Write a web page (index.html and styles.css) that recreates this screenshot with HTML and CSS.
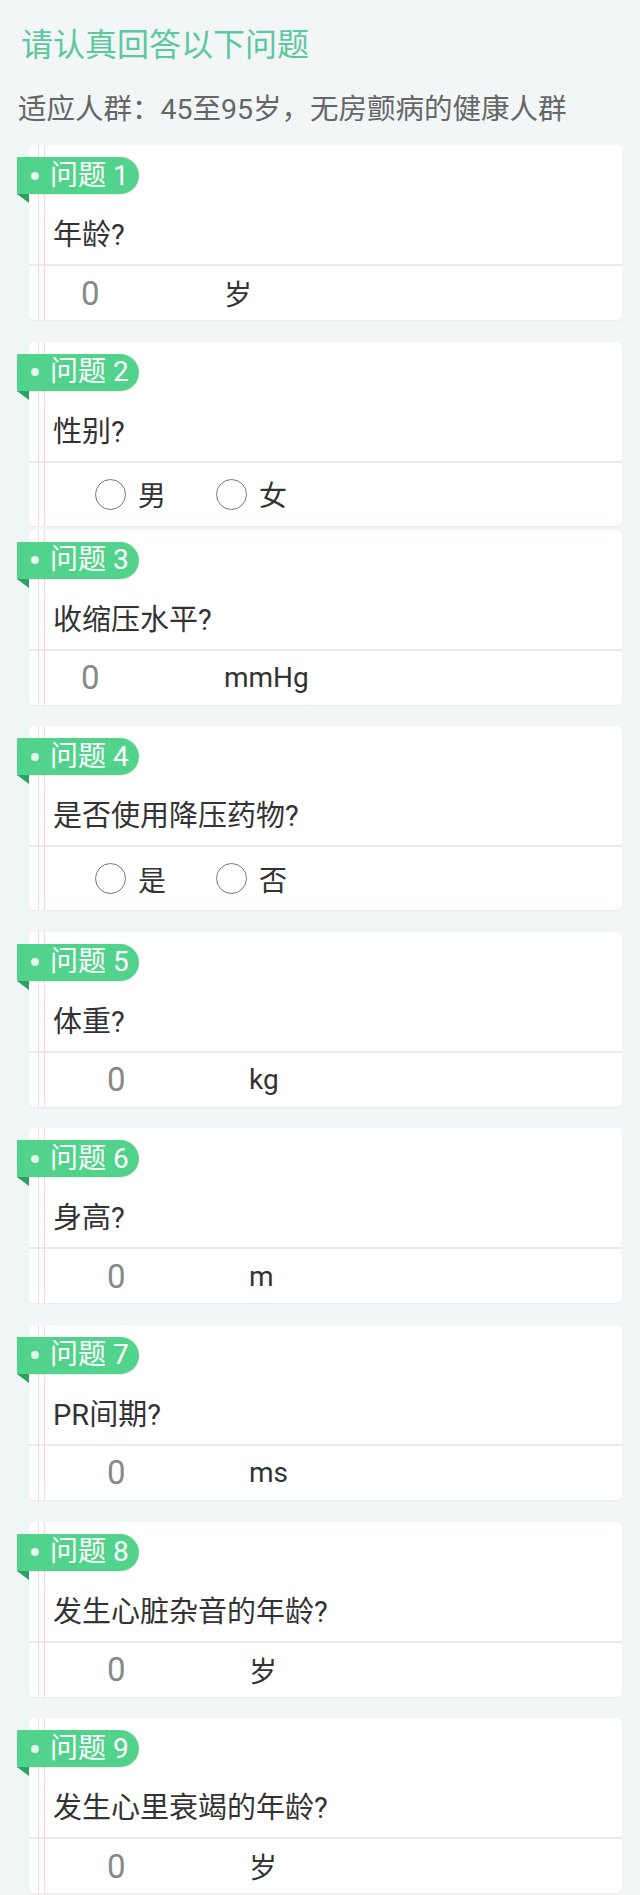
FILE: index.html
```html
<!DOCTYPE html>
<html lang="zh-CN">
<head>
<meta charset="utf-8">
<title>问卷</title>
<link rel="stylesheet" href="styles.css">
</head>
<body>
<div class="page">
  <h1 class="title">请认真回答以下问题</h1>
  <p class="subtitle">适应人群：45至95岁，无房颤病的健康人群</p>
  <div class="list">
    <div class="card">
      <div class="tag"><span class="dot"></span><span>问题 1</span></div>
      <div class="question">年龄?</div>
      <div class="answer"><span class="val">0</span><span class="unit">岁</span></div>
    </div>
    <div class="card">
      <div class="tag"><span class="dot"></span><span>问题 2</span></div>
      <div class="question">性别?</div>
      <div class="answer answer--radio">
        <div class="radio-group">
          <span class="radio"><span class="circle"></span>男</span>
          <span class="radio"><span class="circle"></span>女</span>
        </div>
      </div>
    </div>
    <div class="card card--tight">
      <div class="tag"><span class="dot"></span><span>问题 3</span></div>
      <div class="question">收缩压水平?</div>
      <div class="answer"><span class="val">0</span><span class="unit">mmHg</span></div>
    </div>
    <div class="card">
      <div class="tag"><span class="dot"></span><span>问题 4</span></div>
      <div class="question">是否使用降压药物?</div>
      <div class="answer answer--radio">
        <div class="radio-group">
          <span class="radio"><span class="circle"></span>是</span>
          <span class="radio"><span class="circle"></span>否</span>
        </div>
      </div>
    </div>
    <div class="card">
      <div class="tag"><span class="dot"></span><span>问题 5</span></div>
      <div class="question">体重?</div>
      <div class="answer answer--wide"><span class="val">0</span><span class="unit">kg</span></div>
    </div>
    <div class="card">
      <div class="tag"><span class="dot"></span><span>问题 6</span></div>
      <div class="question">身高?</div>
      <div class="answer answer--wide"><span class="val">0</span><span class="unit">m</span></div>
    </div>
    <div class="card">
      <div class="tag"><span class="dot"></span><span>问题 7</span></div>
      <div class="question">PR间期?</div>
      <div class="answer answer--wide"><span class="val">0</span><span class="unit">ms</span></div>
    </div>
    <div class="card">
      <div class="tag"><span class="dot"></span><span>问题 8</span></div>
      <div class="question">发生心脏杂音的年龄?</div>
      <div class="answer answer--wide"><span class="val">0</span><span class="unit">岁</span></div>
    </div>
    <div class="card">
      <div class="tag"><span class="dot"></span><span>问题 9</span></div>
      <div class="question">发生心里衰竭的年龄?</div>
      <div class="answer answer--wide"><span class="val">0</span><span class="unit">岁</span></div>
    </div>
  </div>
</div>
</body>
</html>
```

FILE: styles.css
```css
body {
  margin: 0;
  background: #f2f6f7;
  font-family: Roboto, "Noto Sans CJK SC", sans-serif;
}

.page {
  padding: 23px 18px 40px 17px;
}

.title {
  margin: 0 0 0 4px;
  font-size: 32px;
  line-height: 44px;
  font-weight: 400;
  color: #5cc89d;
}

.subtitle {
  margin: 23px 0 0 1px;
  font-size: 28.5px;
  line-height: 40px;
  color: #666;
}

.list {
  margin-top: 15px;
  border-left: 12px solid #eef7f5;
  display: flex;
  flex-direction: column;
  gap: 21.6px;
}

.card {
  position: relative;
  background: #fff;
  border-radius: 5px;
  box-shadow: 0 1px 2px rgba(0, 0, 0, 0.05);
  padding-top: 12px;
}

.card::before {
  content: "";
  position: absolute;
  top: 0;
  bottom: 0;
  left: 9px;
  width: 5px;
  border-left: 1px solid #fad6d6;
  border-right: 1px solid #fad6d6;
}

.card--tight {
  margin-top: -17.6px;
}

.tag {
  position: relative;
  z-index: 1;
  margin-left: -12px;
  width: 122px;
  height: 37px;
  box-sizing: border-box;
  background: #52d38b;
  border-radius: 0 18.5px 18.5px 0;
  box-shadow: 0 1px 1px rgba(0, 0, 0, 0.08);
  display: flex;
  align-items: center;
  gap: 11px;
  padding-left: 14px;
  color: #fff;
  font-size: 28px;
  line-height: 1;
}

.tag::after {
  content: "";
  position: absolute;
  left: 0;
  top: 100%;
  border-top: 9px solid #2f9f60;
  border-left: 12px solid transparent;
}

.dot {
  width: 8px;
  height: 8px;
  border-radius: 50%;
  background: #e6f7ec;
}

.question {
  padding: 21px 0 9px 24px;
  font-size: 29px;
  line-height: 40px;
  color: #333;
}

.answer {
  border-top: 2px solid #ebebeb;
  height: 54px;
  display: flex;
  align-items: center;
}

.answer--radio {
  height: 63px;
}

.val {
  margin-left: 52px;
  width: 143px;
  font-size: 33px;
  color: #888;
}

.answer--wide .val {
  margin-left: 78px;
  width: 142px;
}

.unit {
  font-size: 28px;
  color: #333;
}

.radio-group {
  display: flex;
  margin-left: 66px;
  gap: 50px;
}

.radio {
  display: flex;
  align-items: center;
  gap: 12px;
  font-size: 28px;
  color: #333;
}

.circle {
  width: 31px;
  height: 31px;
  box-sizing: border-box;
  border: 1.5px solid #777;
  border-radius: 50%;
  background: #fff;
}
```
